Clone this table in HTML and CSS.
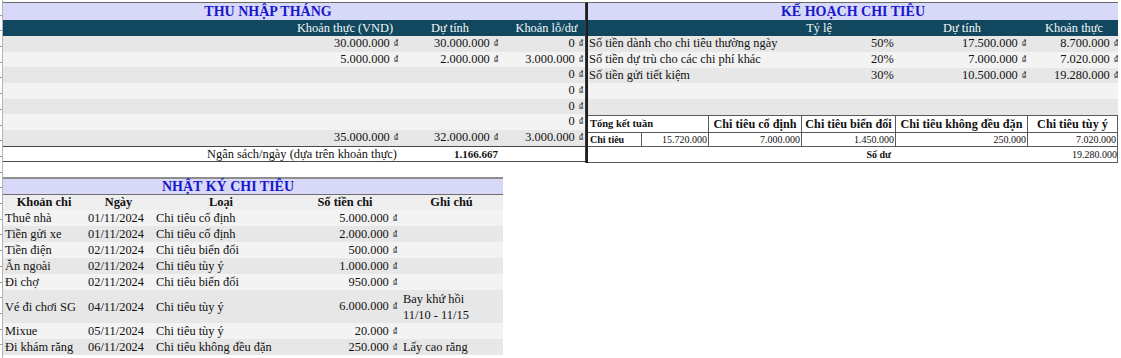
FILE: index.html
```html
<!DOCTYPE html>
<html lang="vi">
<head>
<meta charset="utf-8">
<title>Ngân sách</title>
<link rel="stylesheet" href="styles.css">
</head>
<body>
<div class="sheet">
  <div class="edge"></div>
  <div class="content">
    <div class="top">
      <section class="income">
        <div class="title t-income">THU NHẬP THÁNG</div>
        <div class="irow head">
          <span></span>
          <span class="c">Khoản thực (VND)</span>
          <span class="c">Dự tính</span>
          <span class="c h-loss">Khoản lỗ/dư</span>
        </div>
        <div class="irow dk"><span></span><span class="r">30.000.000 <i class="cur">₫</i></span><span class="r">30.000.000 <i class="cur">₫</i></span><span class="r">0 <i class="cur">₫</i></span></div>
        <div class="irow lt"><span></span><span class="r">5.000.000 <i class="cur">₫</i></span><span class="r">2.000.000 <i class="cur">₫</i></span><span class="r">3.000.000 <i class="cur">₫</i></span></div>
        <div class="irow dk"><span></span><span></span><span></span><span class="r">0 <i class="cur">₫</i></span></div>
        <div class="irow lt"><span></span><span></span><span></span><span class="r">0 <i class="cur">₫</i></span></div>
        <div class="irow dk"><span></span><span></span><span></span><span class="r">0 <i class="cur">₫</i></span></div>
        <div class="irow lt"><span></span><span></span><span></span><span class="r">0 <i class="cur">₫</i></span></div>
        <div class="irow dk"><span></span><span class="r">35.000.000 <i class="cur">₫</i></span><span class="r">32.000.000 <i class="cur">₫</i></span><span class="r">3.000.000 <i class="cur">₫</i></span></div>
        <div class="irow budget">
          <span class="r span2">Ngân sách/ngày (dựa trên khoản thực)</span>
          <span class="r bnum">1.166.667</span>
          <span></span>
        </div>
      </section>
      <section class="plan">
        <div class="title">KẾ HOẠCH CHI TIÊU</div>
        <div class="prow head">
          <span class="r h-rate">Tỷ lệ</span>
          <span></span>
          <span class="h-est">Dự tính</span>
          <span class="c">Khoản thực</span>
        </div>
        <div class="prow dk"><span class="lbl">Số tiền dành cho chi tiêu thường ngày</span><span class="pct">50%</span><span class="r est">17.500.000 <i class="cur">₫</i></span><span class="r act">8.700.000 <i class="cur">₫</i></span></div>
        <div class="prow lt"><span class="lbl">Số tiền dự trù cho các chi phí khác</span><span class="pct">20%</span><span class="r est">7.000.000 <i class="cur">₫</i></span><span class="r act">7.020.000 <i class="cur">₫</i></span></div>
        <div class="prow dk"><span class="lbl">Số tiền gửi tiết kiệm</span><span class="pct">30%</span><span class="r est">10.500.000 <i class="cur">₫</i></span><span class="r act">19.280.000 <i class="cur">₫</i></span></div>
        <div class="prow lt"></div>
        <div class="prow dk"></div>
        <div class="summary">
          <div class="srow s1">
            <span class="cell span2 sh-week">Tổng kết tuần</span>
            <span class="cell sh">Chi tiêu cố định</span>
            <span class="cell sh">Chi tiêu biến đổi</span>
            <span class="cell sh">Chi tiêu không đều đặn</span>
            <span class="cell sh">Chi tiêu tùy ý</span>
          </div>
          <div class="srow s2">
            <span class="cell sl">Chi tiêu</span>
            <span class="cell sn">15.720.000</span>
            <span class="cell sn">7.000.000</span>
            <span class="cell sn">1.450.000</span>
            <span class="cell sn">250.000</span>
            <span class="cell sn">7.020.000</span>
          </div>
          <div class="srow s3">
            <span class="span4 sl-bal">Số dư</span>
            <span class="span2 sn bal">19.280.000</span>
          </div>
        </div>
      </section>
    </div>
    <section class="log">
      <div class="title t-log">NHẬT KÝ CHI TIÊU</div>
      <div class="lrow lhead">
        <span>Khoản chi</span><span>Ngày</span><span>Loại</span><span>Số tiền chi</span><span>Ghi chú</span>
      </div>
      <div class="lrow lt"><span class="a">Thuê nhà</span><span class="b">01/11/2024</span><span class="cc">Chi tiêu cố định</span><span class="d">5.000.000 <i class="cur">₫</i></span><span class="e"></span></div>
      <div class="lrow dk"><span class="a">Tiền gửi xe</span><span class="b">01/11/2024</span><span class="cc">Chi tiêu cố định</span><span class="d">2.000.000 <i class="cur">₫</i></span><span class="e"></span></div>
      <div class="lrow lt"><span class="a">Tiền điện</span><span class="b">02/11/2024</span><span class="cc">Chi tiêu biến đổi</span><span class="d">500.000 <i class="cur">₫</i></span><span class="e"></span></div>
      <div class="lrow dk"><span class="a">Ăn ngoài</span><span class="b">02/11/2024</span><span class="cc">Chi tiêu tùy ý</span><span class="d">1.000.000 <i class="cur">₫</i></span><span class="e"></span></div>
      <div class="lrow lt"><span class="a">Đi chợ</span><span class="b">02/11/2024</span><span class="cc">Chi tiêu biến đổi</span><span class="d">950.000 <i class="cur">₫</i></span><span class="e"></span></div>
      <div class="lrow dk tall"><span class="a">Vé đi chơi SG</span><span class="b">04/11/2024</span><span class="cc">Chi tiêu tùy ý</span><span class="d">6.000.000 <i class="cur">₫</i></span><span class="e note">Bay khứ hồi<br>11/10 - 11/15</span></div>
      <div class="lrow lt"><span class="a">Mixue</span><span class="b">05/11/2024</span><span class="cc">Chi tiêu tùy ý</span><span class="d">20.000 <i class="cur">₫</i></span><span class="e"></span></div>
      <div class="lrow dk"><span class="a">Đi khám răng</span><span class="b">06/11/2024</span><span class="cc">Chi tiêu không đều đặn</span><span class="d">250.000 <i class="cur">₫</i></span><span class="e">Lấy cao răng</span></div>
    </section>
  </div>
</div>
</body>
</html>
```
FILE: styles.css
```css
* { box-sizing: border-box; margin: 0; padding: 0; }

body {
  margin: 0;
  background: #ffffff;
  font-family: "Liberation Serif", "Times New Roman", serif;
  font-size: 12.4px;
  color: #111111;
}

.sheet {
  display: flex;
  width: 1121px;
  height: 358px;
  overflow: hidden;
}

.edge {
  width: 3px;
  flex: none;
  border-right: 1px solid #b4b4b4;
  background: repeating-linear-gradient(to bottom, transparent 0, transparent 14.7px, #9a9a9a 14.7px, #9a9a9a 15.7px);
}

.content {
  display: flex;
  flex-direction: column;
  padding-top: 2px;
}

.top { display: flex; }

.title {
  height: 17px;
  line-height: 17px;
  background: #d8d8f8;
  color: #1717cc;
  font-weight: bold;
  font-size: 14px;
  text-align: center;
  white-space: nowrap;
}
.t-income { padding-right: 52px; }
.t-log { padding-right: 50px; height: 16px; line-height: 16px; }

.head {
  background: #11475f;
  color: #f4f7f9;
  height: 16px;
  line-height: 16px;
}

.dk { background: #e7e7e7; }
.lt { background: #f3f3f3; }

.irow > span, .prow > span, .srow > span, .lrow > span {
  white-space: nowrap;
  overflow: hidden;
}
.r { text-align: right; }
.c { text-align: center; }
.span2 { grid-column: span 2; }
.span4 { grid-column: span 4; }

.cur {
  font-style: normal;
  font-size: 8px;
  position: relative;
  top: -2px;
  margin-left: 1px;
}

/* ---------- income ---------- */
.income {
  width: 583px;
  flex: none;
  border-top: 1px solid #6a6a6a;
  border-right: 1px solid #3a3a3a;
}

.irow {
  display: grid;
  grid-template-columns: 287px 110px 100px 85px;
  height: 15.7px;
  line-height: 15.7px;
}
.irow.head { height: 16px; line-height: 16px; }
.irow .r { padding-right: 2px; }
.h-loss { padding-left: 8px; }

.irow.budget {
  background: #ffffff;
  border-top: 1px solid #4a4a4a;
  border-bottom: 1px solid #4a4a4a;
  height: 16px;
  line-height: 14px;
}
.irow.budget .span2 { padding-right: 3px; }
.bnum { font-weight: bold; font-size: 11px; }

/* ---------- plan ---------- */
.plan {
  width: 532px;
  flex: none;
  border-top: 1px solid #6a6a6a;
  border-left: 2px solid #1e1e1e;
}

.prow {
  display: grid;
  grid-template-columns: 252px 95px 95px 88px;
  height: 15.8px;
  line-height: 15.8px;
}
.prow.head { height: 16px; line-height: 16px; }
.h-rate { padding-right: 8px; }
.h-est { padding-left: 8px; }
.lbl { padding-left: 1px; }
.pct { padding-left: 31px; }
.est { padding-right: 4px; }
.act { padding-right: 0; }

.summary {
  border-top: 1px solid #5a5a5a;
}
.srow {
  display: grid;
  grid-template-columns: 54px 67px 93px 94px 132px 90px;
}
.srow .cell {
  border-right: 1px solid #5a5a5a;
  border-bottom: 1px solid #5a5a5a;
}
.s1 { height: 17px; line-height: 16px; }
.s2 { height: 14px; line-height: 13px; }
.s3 {
  height: 16px;
  line-height: 15px;
  border-bottom: 1px solid #5a5a5a;
  border-right: 1px solid #5a5a5a;
}
.sh {
  font-weight: bold;
  font-size: 12.2px;
  text-align: center;
}
.sh-week {
  font-weight: bold;
  font-size: 10.5px;
  padding-left: 2px;
}
.sl {
  font-weight: bold;
  font-size: 10px;
  padding-left: 2px;
}
.sn {
  font-size: 10px;
  text-align: right;
  padding-right: 1px;
}
.sl-bal {
  font-weight: bold;
  font-size: 10px;
  text-align: right;
  padding-right: 5px;
}

/* ---------- log ---------- */
.log {
  width: 500px;
  margin-top: 14px;
  border-top: 2px solid #8e8e8e;
}
.t-log { border-bottom: 1px solid #6e6e6e; }

.lrow {
  display: grid;
  grid-template-columns: 82px 67px 138px 110px 103px;
  height: 16.1px;
  line-height: 16.1px;
}
.lrow.tall {
  height: 32.2px;
  align-items: center;
}
.lhead {
  background: #eeeeee;
  height: 15px;
  line-height: 15px;
  font-weight: bold;
}
.lhead span { text-align: center; }
.a { padding-left: 2px; }
.b { padding-left: 3px; }
.cc { padding-left: 4px; }
.d { text-align: right; padding-right: 3px; }
.e { padding-left: 3px; }
.note { line-height: 16px; }
```
